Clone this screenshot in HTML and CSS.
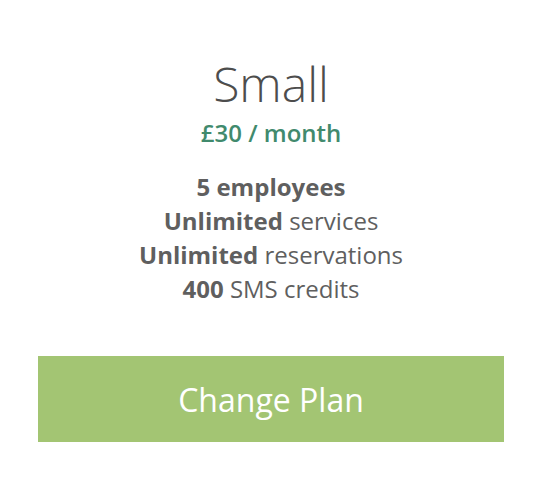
FILE: index.html
```html
<!DOCTYPE html>
<html>
<head>
<meta charset="utf-8">
<link rel="stylesheet" href="styles.css">
</head>
<body>
<div class="plan">
  <h1 class="plan-name">Small</h1>
  <div class="plan-price">£30 / month</div>
  <ul class="features">
    <li><b>5 employees</b></li>
    <li><b>Unlimited</b> services</li>
    <li><b>Unlimited</b> reservations</li>
    <li><b>400</b> SMS credits</li>
  </ul>
  <button class="plan-btn">Change Plan</button>
</div>
</body>
</html>
```
FILE: styles.css
```css
html, body {
  margin: 0;
  padding: 0;
  background: #fff;
}
body {
  font-family: "Open Sans", sans-serif;
  color: #5f5f5f;
}
.plan {
  display: flex;
  flex-direction: column;
  align-items: center;
  padding: 52px 38px 0;
}
.plan-name {
  margin: 0;
  font-size: 48px;
  font-weight: 300;
  line-height: 64px;
  color: #4d4d4d;
}
.plan-price {
  margin-top: 2px;
  font-size: 24px;
  font-weight: 600;
  line-height: 30px;
  color: #418a6d;
}
.features {
  list-style: none;
  margin: 22px 0 0;
  padding: 0;
  text-align: center;
  font-size: 24px;
  line-height: 34px;
}
.features b {
  font-weight: 700;
}
.plan-btn {
  margin-top: 50px;
  width: 100%;
  height: 86px;
  border: 0;
  background: #a3c573;
  color: #fff;
  font-family: "Open Sans", sans-serif;
  font-size: 32px;
  font-weight: 400;
}
```
